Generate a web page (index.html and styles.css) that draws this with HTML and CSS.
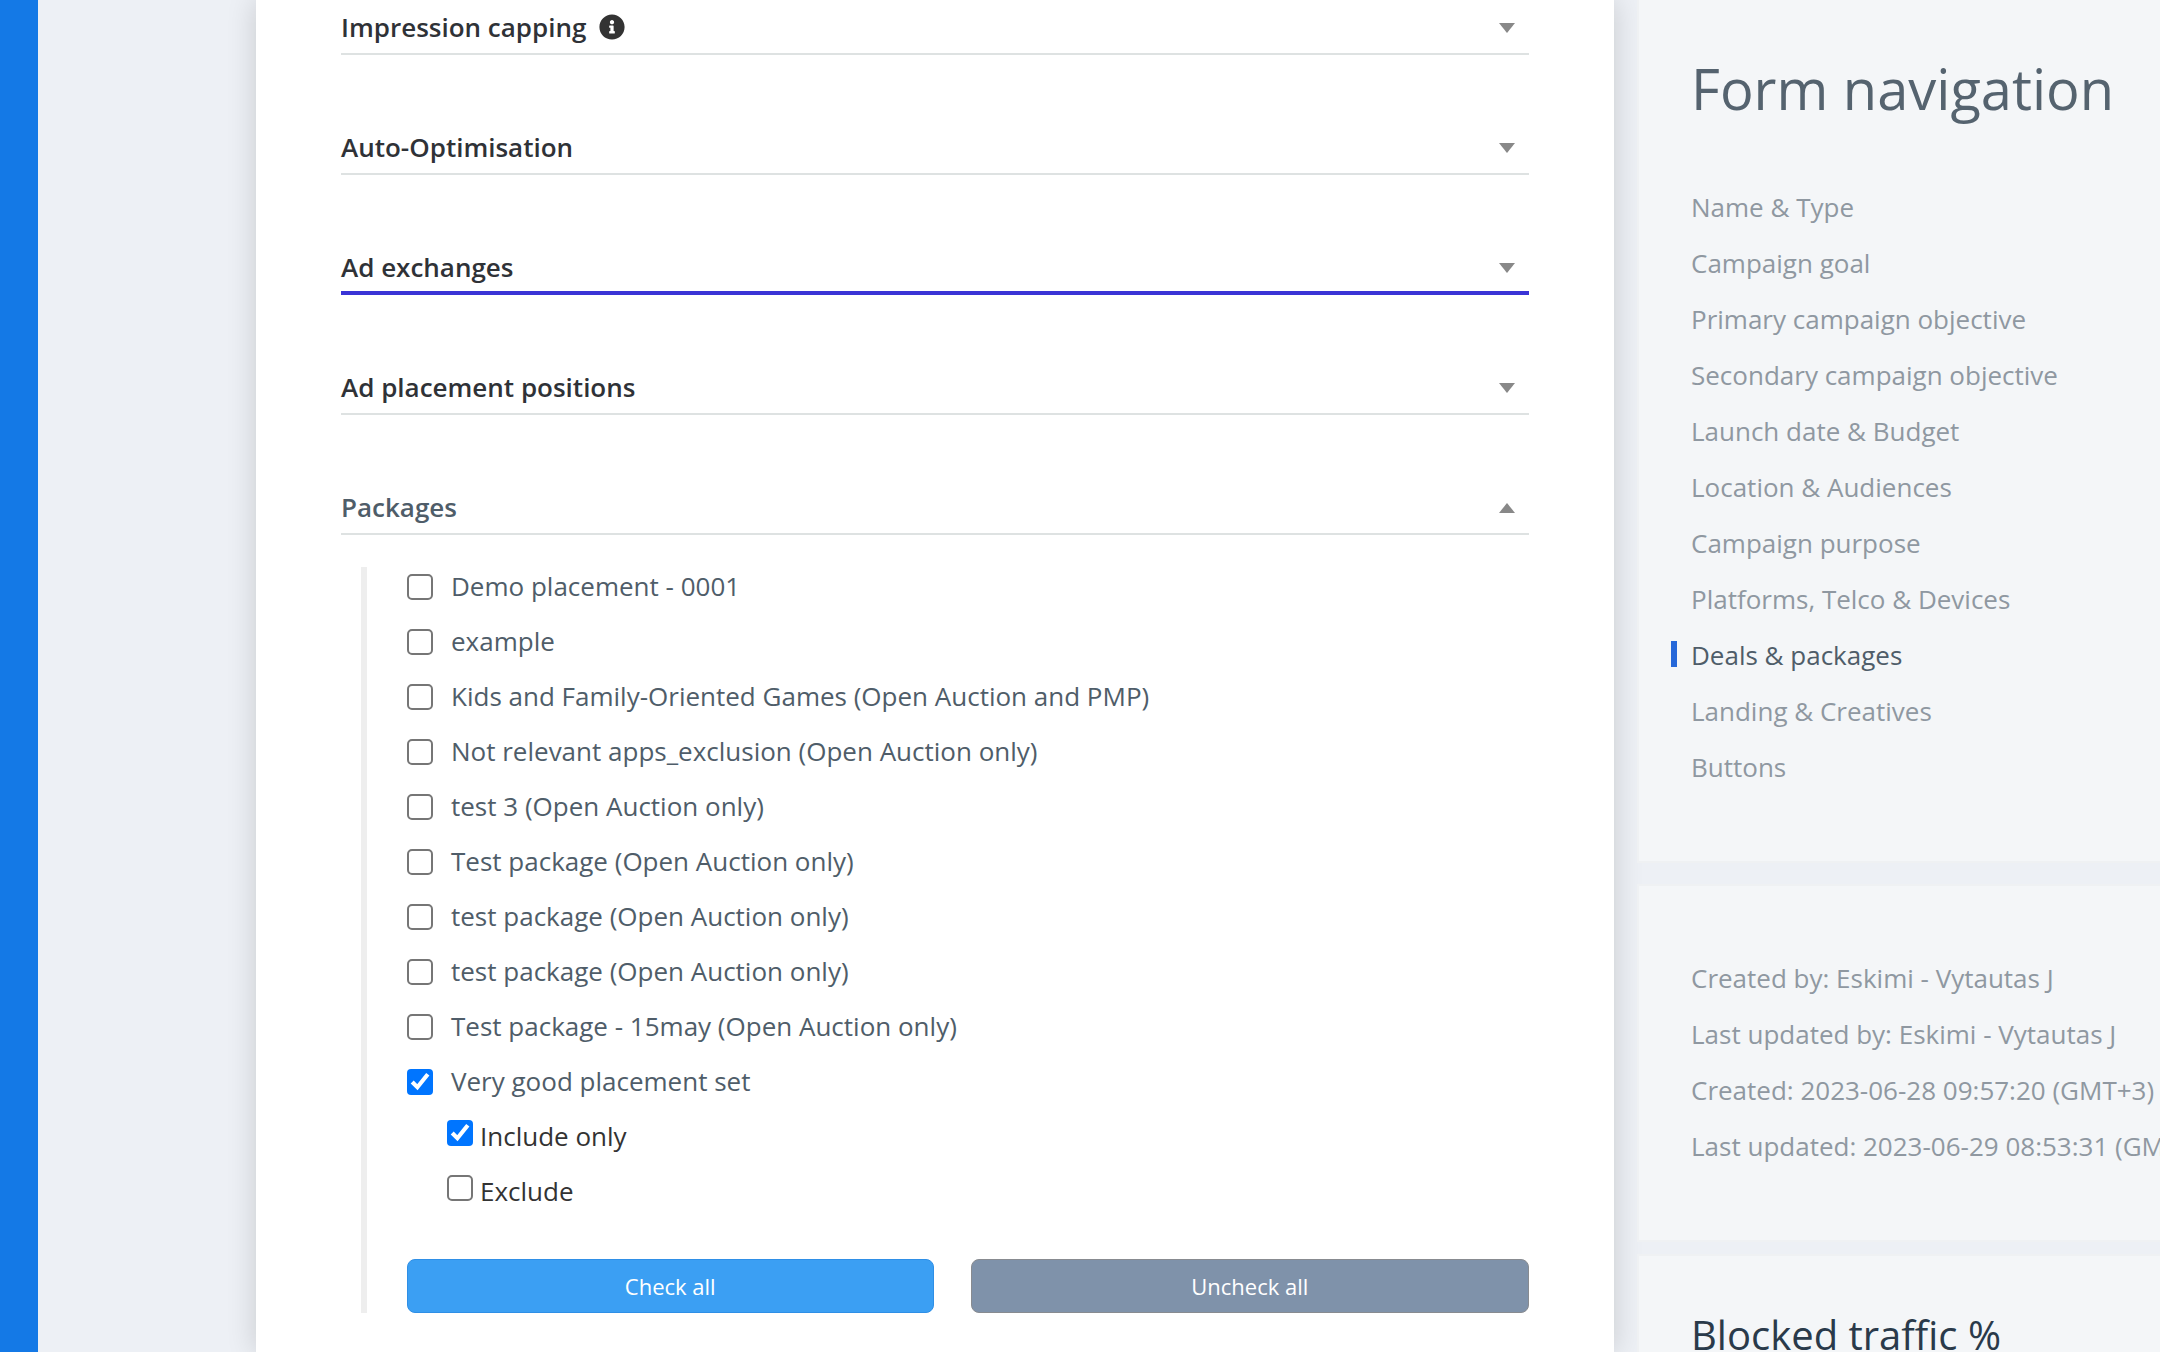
FILE: index.html

```html
<!DOCTYPE html>
<html lang="en">
<head>
    <meta charset="UTF-8">
    <meta name="viewport" content="width=device-width, initial-scale=1.0">
    <title>Campaign form</title>
    <link rel="stylesheet" href="styles.css">
</head>
<body>

    <div class="sidebar"></div>

    <main class="content">
        <div class="card">
            <div class="section">
                <div class="section-head">
                    <span class="section-title">Impression capping</span>
                    <svg class="info-icon" viewBox="0 0 512 512"><path fill-rule="evenodd" d="M256 8C119 8 8 119 8 256s111 248 248 248 248-111 248-248S393 8 256 8zm0 110c23 0 42 19 42 42s-19 42-42 42-42-19-42-42 19-42 42-42zm56 254c0 7-5 12-12 12h-88c-7 0-12-5-12-12v-24c0-7 5-12 12-12h12v-64h-12c-7 0-12-5-12-12v-24c0-7 5-12 12-12h64c7 0 12 5 12 12v100h12c7 0 12 5 12 12z"/></svg>
                    <span class="arrow"></span>
                </div>
            </div>
            <div class="section">
                <div class="section-head">
                    <span class="section-title">Auto-Optimisation</span>
                    <span class="arrow"></span>
                </div>
            </div>
            <div class="section">
                <div class="section-head focused">
                    <span class="section-title">Ad exchanges</span>
                    <span class="arrow"></span>
                </div>
            </div>
            <div class="section">
                <div class="section-head">
                    <span class="section-title">Ad placement positions</span>
                    <span class="arrow"></span>
                </div>
            </div>
            <div class="section">
                <div class="section-head open">
                    <span class="section-title">Packages</span>
                    <span class="arrow up"></span>
                </div>
                <div class="packages">
                    <label class="package"><input type="checkbox"><span>Demo placement - 0001</span></label>
                    <label class="package"><input type="checkbox"><span>example</span></label>
                    <label class="package"><input type="checkbox"><span>Kids and Family-Oriented Games (Open Auction and PMP)</span></label>
                    <label class="package"><input type="checkbox"><span>Not relevant apps_exclusion (Open Auction only)</span></label>
                    <label class="package"><input type="checkbox"><span>test 3 (Open Auction only)</span></label>
                    <label class="package"><input type="checkbox"><span>Test package (Open Auction only)</span></label>
                    <label class="package"><input type="checkbox"><span>test package (Open Auction only)</span></label>
                    <label class="package"><input type="checkbox"><span>test package (Open Auction only)</span></label>
                    <label class="package"><input type="checkbox"><span>Test package - 15may (Open Auction only)</span></label>
                    <label class="package"><input type="checkbox" checked><span>Very good placement set</span></label>
                    <label class="sub-option"><input type="checkbox" checked><span>Include only</span></label>
                    <label class="sub-option"><input type="checkbox"><span>Exclude</span></label>
                    <div class="buttons">
                        <button type="button" class="btn btn-check">Check all</button>
                        <button type="button" class="btn btn-uncheck">Uncheck all</button>
                    </div>
                </div>
            </div>
        </div>
    </main>

    <aside class="side">
        <div class="panel panel-nav">
            <h2 class="nav-title">Form navigation</h2>
            <ul class="nav-list">
                <li>Name &amp; Type</li>
                <li>Campaign goal</li>
                <li>Primary campaign objective</li>
                <li>Secondary campaign objective</li>
                <li>Launch date &amp; Budget</li>
                <li>Location &amp; Audiences</li>
                <li>Campaign purpose</li>
                <li>Platforms, Telco &amp; Devices</li>
                <li class="active">Deals &amp; packages</li>
                <li>Landing &amp; Creatives</li>
                <li>Buttons</li>
            </ul>
        </div>
        <div class="panel panel-meta">
            <p>Created by: Eskimi - Vytautas J</p>
            <p>Last updated by: Eskimi - Vytautas J</p>
            <p>Created: 2023-06-28 09:57:20 (GMT+3)</p>
            <p>Last updated: 2023-06-29 08:53:31 (GMT+3)</p>
        </div>
        <div class="panel panel-blocked">
            <h2 class="blocked-title">Blocked traffic %</h2>
        </div>
    </aside>

</body>
</html>
```

FILE: styles.css

```css
html, body {
    height: 100%;
}
body {
    font-family: 'Open Sans', 'Noto Sans', sans-serif;
    background-color: #edf0f5;
    margin: 0;
    padding: 0;
    display: flex;
    height: 1352px;
    overflow: hidden;
}
.sidebar {
    width: 38px;
    flex-shrink: 0;
    background-color: #1479e6;
}
.content {
    width: 1599px;
    flex-shrink: 0;
    padding-left: 218px;
    padding-right: 23px;
    box-sizing: border-box;
}
.card {
    background-color: white;
    height: 1352px;
    padding: 0 85px;
    box-shadow: 0 0 28px rgba(0, 0, 0, 0.16);
}
.section {
    margin-bottom: 65px;
}
.section-head {
    display: flex;
    align-items: center;
    height: 55px;
    box-sizing: border-box;
    border-bottom: 2px solid #dee2e2;
}
.section-head.focused {
    padding-top: 2px;
    border-bottom: 4px solid #3a34d6;
}
.section-title {
    font-size: 26px;
    font-weight: 600;
    color: #2f3237;
}
.open .section-title {
    color: #4f5d69;
}
.info-icon {
    width: 26px;
    height: 26px;
    margin-left: 13px;
    fill: #333;
}
.arrow {
    margin-left: auto;
    margin-right: 14px;
    margin-top: 3px;
    width: 0;
    height: 0;
    border-left: 8px solid transparent;
    border-right: 8px solid transparent;
    border-top: 10px solid #888;
}
.arrow.up {
    border-top: 0;
    border-bottom: 10px solid #888;
}
.packages {
    margin: 32px 0 0 20px;
    padding-left: 40px;
    border-left: 6px solid #eeeeee;
    height: 746px;
    box-sizing: border-box;
}
.package {
    display: flex;
    align-items: center;
    height: 40px;
    margin-bottom: 15px;
    font-size: 26px;
    color: #4f5d69;
}
.package input {
    zoom: 2;
    margin: 0 9px 0 0;
}
.package span {
    margin-bottom: 2px;
}
.sub-option {
    display: flex;
    align-items: flex-start;
    height: 40px;
    box-sizing: border-box;
    padding-top: 1px;
    margin-bottom: 15px;
    padding-left: 40px;
    font-size: 26px;
    color: #333333;
}
.sub-option input {
    zoom: 2;
    margin: 1px 3.5px 0 0;
}
.buttons {
    display: flex;
    gap: 37px;
    margin-top: 47px;
}
.btn {
    height: 54px;
    border-radius: 8px;
    font-family: inherit;
    font-size: 22px;
    color: white;
    cursor: pointer;
}
.btn-check {
    width: 527px;
    background-color: #3b9ff3;
    border: 1px solid #2f8fe6;
}
.btn-uncheck {
    width: 559px;
    background-color: #7f92aa;
    border: 1px solid #888b90;
}
.side {
    flex: 1;
    min-width: 0;
    white-space: nowrap;
    overflow: hidden;
}
.panel {
    background-color: #f4f6f8;
    border: 2px solid #eff1f3;
    border-right: 0;
    padding-left: 52px;
    box-sizing: border-box;
}
.panel-nav {
    height: 863px;
    border-top: 0;
    margin-bottom: 21px;
}
.nav-title {
    margin: 0;
    padding-top: 50px;
    font-size: 56px;
    font-weight: 400;
    line-height: 76px;
    color: #55636f;
}
.nav-list {
    list-style: none;
    margin: 53px 0 0;
    padding: 0;
}
.nav-list li {
    position: relative;
    height: 56px;
    line-height: 56px;
    font-size: 26px;
    color: #8f98a1;
}
.nav-list li.active {
    color: #4f5d69;
}
.nav-list li.active::before {
    content: '';
    position: absolute;
    left: -20px;
    top: 14px;
    width: 6px;
    height: 26px;
    background-color: #2668d9;
}
.panel-meta {
    height: 358px;
    padding-top: 64px;
    margin-bottom: 12px;
}
.panel-meta p {
    margin: 0;
    height: 56px;
    line-height: 56px;
    font-size: 26px;
    color: #8f98a1;
}
.panel-blocked {
    height: 200px;
}
.blocked-title {
    margin: 0;
    padding-top: 51px;
    font-size: 40px;
    font-weight: 400;
    line-height: 56px;
    color: #2a3a4a;
}
```
